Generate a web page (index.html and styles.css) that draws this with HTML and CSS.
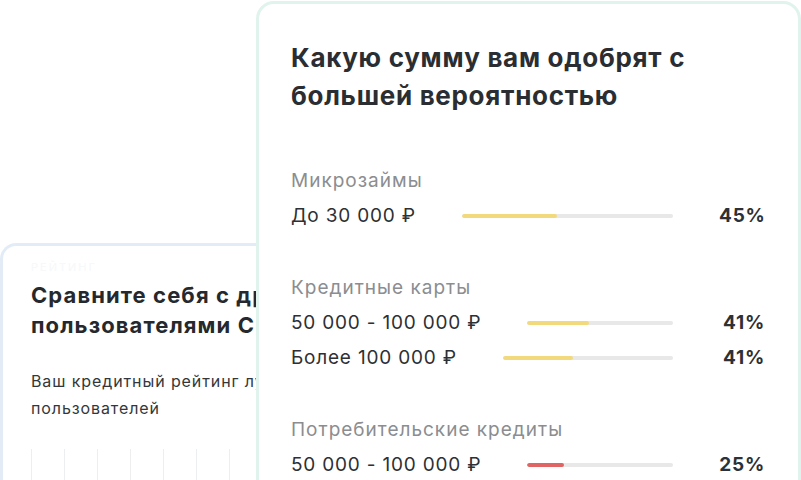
FILE: index.html
```html
<!DOCTYPE html>
<html lang="ru">
<head>
    <meta charset="UTF-8">
    <title>Кредитный рейтинг</title>
<link rel="stylesheet" href="styles.css">
</head>
<body>
<div class="stage">
    <div class="card compare">
        <div class="kicker">Рейтинг</div>
        <h2>Сравните себя с другими<br>пользователями Сравни</h2>
        <p>Ваш кредитный рейтинг лучше, чем у<br>пользователей</p>
        <div class="grid-lines">
            <span></span><span></span><span></span><span></span><span></span><span></span><span></span>
        </div>
    </div>

    <div class="card approve">
        <h1>Какую сумму вам одобрят с<br>большей вероятностью</h1>

        <div class="group">
            <div class="group-title">Микрозаймы</div>
            <div class="row">
                <span class="label">До 30 000 ₽</span>
                <span class="bar"><i class="fill yellow" style="width:45%"></i></span>
                <b class="pct">45%</b>
            </div>
        </div>

        <div class="group">
            <div class="group-title">Кредитные карты</div>
            <div class="row">
                <span class="label">50 000 - 100 000 ₽</span>
                <span class="bar"><i class="fill yellow" style="width:42%"></i></span>
                <b class="pct">41%</b>
            </div>
            <div class="row">
                <span class="label">Более 100 000 ₽</span>
                <span class="bar"><i class="fill yellow" style="width:41%"></i></span>
                <b class="pct">41%</b>
            </div>
        </div>

        <div class="group">
            <div class="group-title">Потребительские кредиты</div>
            <div class="row">
                <span class="label">50 000 - 100 000 ₽</span>
                <span class="bar"><i class="fill red" style="width:25%"></i></span>
                <b class="pct">25%</b>
            </div>
        </div>
    </div>
</div>
</body>
</html>
```

FILE: styles.css
```css
html, body {
    margin: 0;
    width: 100%;
    height: 100%;
    overflow: hidden;
    background: #fff;
    font-family: Inter, "Liberation Sans", Arial, sans-serif;
    color: #2b2f33;
}
.stage {
    display: grid;
    grid-template-columns: 256px 545px;
    grid-template-rows: 243px auto;
}
.card {
    background: #fff;
    box-sizing: border-box;
}

/* back card */
.compare {
    grid-column: 1 / 3;
    grid-row: 2;
    width: 300px;
    height: 300px;
    overflow: hidden;
    border: 3px solid #e3ecf6;
    border-right: 0;
    border-radius: 16px 0 0 16px;
    padding: 14px 0 0 28px;
}
.kicker {
    font-size: 11px;
    line-height: 14px;
    letter-spacing: 2px;
    color: #f6f8fa;
    text-transform: uppercase;
}
.compare h2,
.compare p {
    width: 232px;
    white-space: nowrap;
    overflow: hidden;
}
.compare h2 {
    margin: 6px 0 0;
    font-size: 22px;
    line-height: 30px;
    letter-spacing: 1.1px;
    font-weight: 700;
    color: #25292d;
}
.compare p {
    margin: 28px 0 0;
    font-size: 16px;
    line-height: 27px;
    letter-spacing: 0.9px;
    color: #33373b;
}
.grid-lines {
    display: flex;
    gap: 32px;
    margin-top: 27px;
    height: 40px;
}
.grid-lines span {
    width: 1px;
    background: #eceef0;
}

/* front card */
.approve {
    grid-column: 2;
    grid-row: 1 / 3;
    z-index: 1;
    margin-top: 1px;
    height: 520px;
    border: 3px solid #e0f3ed;
    border-radius: 18px;
    padding: 35px 34px 0 32px;
}
.approve h1 {
    margin: 0;
    font-size: 26px;
    line-height: 38px;
    letter-spacing: 0.7px;
    font-weight: 700;
    color: #2a2e32;
}
.group {
    margin-top: 48px;
}
.group:first-of-type {
    margin-top: 54px;
}
.group-title {
    font-size: 19px;
    line-height: 24px;
    letter-spacing: 1px;
    color: #8b8d90;
}
.row {
    display: flex;
    align-items: center;
    gap: 46px;
    margin-top: 11px;
    font-size: 19px;
    line-height: 24px;
    letter-spacing: 0.8px;
    color: #2d3034;
}
.bar {
    flex: 1;
    height: 4px;
    border-radius: 2px;
    background: #e8e8e9;
    overflow: hidden;
}
.fill {
    display: block;
    height: 100%;
    border-radius: 2px;
}
.fill.yellow {
    background: #f2da7c;
}
.fill.red {
    background: #e06464;
}
.pct {
    width: 46px;
    margin-right: -1px;
    text-align: right;
    font-weight: 700;
    color: #2d3034;
}
```
